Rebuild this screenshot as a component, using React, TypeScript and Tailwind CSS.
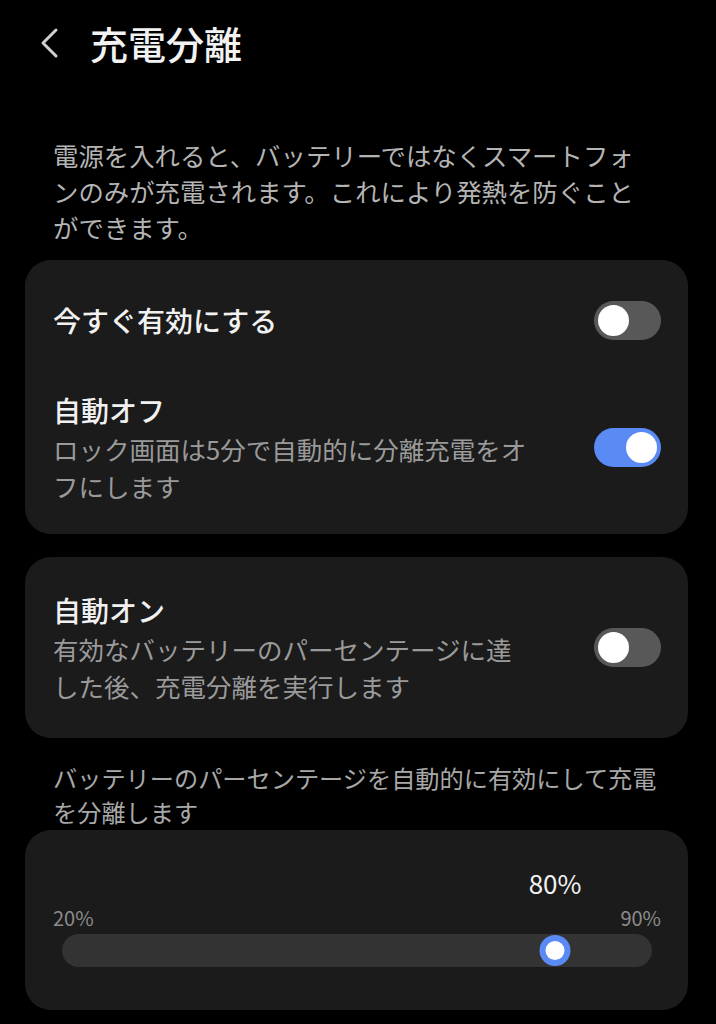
import React from "react";

const FONT = { fontFamily: '"Noto Sans CJK JP", "Noto Sans", sans-serif' };

function Toggle({ on }: { on: boolean }) {
  return (
    <div
      className={
        "relative h-[39px] w-[67px] shrink-0 rounded-full " +
        (on ? "bg-[#5a8af4]" : "bg-[#585858]")
      }
    >
      <div
        className={
          "absolute top-[4px] h-[31px] w-[31px] rounded-full bg-white " +
          (on ? "right-[4px]" : "left-[4px]")
        }
      />
    </div>
  );
}

function Row({ title, sub, on }: { title: string; sub?: string; on: boolean }) {
  return (
    <div className="flex items-center justify-between gap-6">
      <div className="flex-1">
        <div className="text-[28px] leading-[40px] font-medium text-[#f1f1f1]">{title}</div>
        {sub && (
          <div className="text-[25.5px] leading-[37px] text-[#9a9a9a] pr-[40px]">{sub}</div>
        )}
      </div>
      <Toggle on={on} />
    </div>
  );
}

export default function App() {
  const min = 20;
  const max = 90;
  const value = 80;
  const pct = ((value - min) / (max - min)) * 100 * 0.975;

  return (
    <div className="min-h-[1024px] w-[716px] bg-black overflow-hidden" style={FONT}>
      {/* Header */}
      <div className="flex items-center h-[86px] pl-[40px]">
        <svg width="20" height="32" viewBox="0 0 20 32" className="shrink-0">
          <polyline
            points="16,3 3,16 16,29"
            fill="none"
            stroke="#d0d0d0"
            strokeWidth="3"
            strokeLinecap="round"
            strokeLinejoin="round"
          />
        </svg>
        <div className="ml-[30px] text-[38px] leading-[44px] font-medium text-[#f2f2f2]">充電分離</div>
      </div>

      {/* Description */}
      <div className="mt-[51px] pl-[53px] pr-[70px] text-[25.4px] leading-[36px] text-[#b4b4b4]">
        電源を入れると、バッテリーではなくスマートフォンのみが充電されます。これにより発熱を防ぐことができます。
      </div>

      {/* Card 1 */}
      <div className="ml-[25px] mr-[28px] mt-[15px] rounded-[26px] bg-[#1b1b1b] pl-[28px] pr-[27px] pt-[40px] pb-[30px] flex flex-col gap-[50px]">
        <Row title="今すぐ有効にする" on={false} />
        <Row title="自動オフ" sub="ロック画面は5分で自動的に分離充電をオフにします" on={true} />
      </div>

      {/* Card 2 */}
      <div className="ml-[25px] mr-[28px] mt-[23px] rounded-[26px] bg-[#1b1b1b] pl-[28px] pr-[27px] pt-[33px] pb-[34px]">
        <Row
          title="自動オン"
          sub="有効なバッテリーのパーセンテージに達した後、充電分離を実行します"
          on={false}
        />
      </div>

      {/* Caption */}
      <div className="mt-[23px] px-[53px] text-[24.2px] leading-[34px] text-[#a8a8a8]">
        バッテリーのパーセンテージを自動的に有効にして充電を分離します
      </div>

      {/* Slider card */}
      <div className="ml-[25px] mr-[28px] mt-[1px] rounded-[26px] bg-[#1b1b1b] pl-[28px] pr-[27px] pt-[36px] pb-[43px]">
        <div className="relative mx-[9px] h-[34px]">
          <div
            className="absolute top-0 -translate-x-1/2 text-[26px] leading-[34px] text-[#f2f2f2]"
            style={{ left: `${pct}%` }}
          >
            80%
          </div>
        </div>
        <div className="mt-[6px] flex justify-between text-[20px] leading-[24px] text-[#8c8c8c]">
          <span>20%</span>
          <span>90%</span>
        </div>
        <div className="relative mt-[4px] mx-[9px] h-[33px] rounded-full bg-[#333333]">
          <div
            className="absolute top-[1px] h-[31px] w-[31px] -translate-x-1/2 rounded-full bg-[#5a8af4] flex items-center justify-center"
            style={{ left: `${pct}%` }}
          >
            <div className="h-[19px] w-[19px] rounded-full bg-white" />
          </div>
        </div>
      </div>
    </div>
  );
}
